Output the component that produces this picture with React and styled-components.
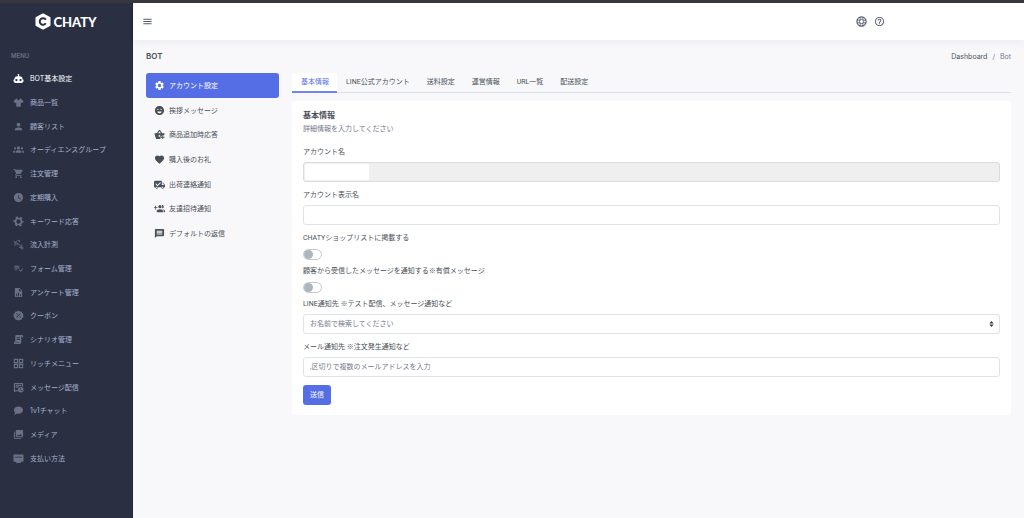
import React, { useState } from 'react';
import styled, { createGlobalStyle, css } from 'styled-components';
import {
	MdPerson,
	MdShoppingCart,
	MdWatchLater,
	MdPlaylistAddCheck,
	MdPhotoLibrary,
	MdSettings,
	MdEmojiEmotions,
	MdFavorite,
	MdMessage,
	MdHelpOutline,
	MdMenu,
} from 'react-icons/md';

const GlobalStyle = createGlobalStyle`
	*, *::before, *::after {
		box-sizing: border-box;
	}
	body {
		margin: 0;
		background: #f8f8fb;
		color: #495057;
		font-family: Inter, 'Noto Sans CJK JP', sans-serif;
		font-size: 7px;
		line-height: 11px;
	}
	button, input, select {
		font: inherit;
		color: inherit;
	}
	a {
		color: inherit;
		text-decoration: none;
	}
	ul, ol {
		list-style: none;
		margin: 0;
		padding: 0;
	}
`;

const Page = styled.div`
	display: flex;
	min-height: 100vh;
	border-top: 3px solid #38373d;
`;
const Sidebar = styled.aside`
	flex: 0 0 133px;
	background: #2a3042;
	color: #a6b0cf;
	border-right: 1px solid #1f253a;
`;
const Logo = styled.a`
	display: flex;
	align-items: center;
	justify-content: center;
	gap: 2px;
	height: 37px;
	color: #fff;
	font-family: Lato, sans-serif;
	font-size: 13px;
	font-weight: 900;
	line-height: 16px;
`;
const MenuTitle = styled.div`
	padding: 10px 11px 6px;
	color: #6a7187;
	font-size: 6px;
	font-weight: 600;
`;
const Menu = styled.ul`
	display: grid;
	grid-auto-rows: 1fr;
	height: 403px;
`;
const MenuLink = styled.a`
	display: flex;
	align-items: center;
	gap: 6px;
	height: 100%;
	padding-left: 13px;
	white-space: nowrap;
	color: ${({ $active }) => ($active ? '#fff' : '#a6b0cf')};

	svg {
		width: 11px;
		height: 11px;
		color: ${({ $active }) => ($active ? '#fff' : '#6a7187')};
	}
`;

const Main = styled.div`
	flex: 1;
	min-width: 0;
`;
const Header = styled.header`
	display: flex;
	align-items: center;
	justify-content: space-between;
	height: 37px;
	padding: 0 139px 0 9px;
	background: #fff;
	box-shadow: 0 4px 8px rgba(18, 38, 63, 0.04);
`;
const HeaderTools = styled.div`
	display: flex;
	gap: 7px;
`;
const IconButton = styled.button`
	display: flex;
	padding: 0;
	border: 0;
	background: none;
	color: #555b6d;
	cursor: pointer;

	svg {
		width: 11px;
		height: 11px;
	}
`;
const Content = styled.main`
	padding: 10px 13px;
`;
const TitleRow = styled.div`
	display: flex;
	align-items: center;
	justify-content: space-between;
	height: 12px;
	margin-bottom: 11px;
`;
const PageTitle = styled.h1`
	margin: 0;
	font-size: 8px;
	font-weight: 600;
`;
const Breadcrumb = styled.ol`
	display: flex;
	gap: 5px;
	color: #74788d;

	a {
		color: #495057;
	}
`;
const Columns = styled.div`
	display: flex;
	align-items: flex-start;
	gap: 13px;
`;
const SideNav = styled.ul`
	display: grid;
	grid-auto-rows: 1fr;
	flex: 0 0 133px;
	height: 173px;
`;
const SideLink = styled.a`
	display: flex;
	align-items: center;
	gap: 4px;
	height: 100%;
	padding-left: 8px;
	border-radius: 3px;
	color: #495057;
	${({ $active }) =>
		$active &&
		css`
			background: #556ee6;
			color: #fff;
		`}

	svg {
		width: 11px;
		height: 11px;
	}
`;
const Panel = styled.div`
	flex: 1;
	min-width: 0;
	font-family: Roboto, 'Noto Sans CJK JP', sans-serif;
`;
const Tabs = styled.div`
	display: flex;
	height: 20px;
	margin-bottom: 8px;
	box-shadow: inset 0 -1px #dcdfe5;
`;
const Tab = styled.button`
	padding: 0 8px 0 9px;
	border: 0;
	border-bottom: 2px solid transparent;
	border-radius: 3px 3px 0 0;
	background: none;
	cursor: pointer;
	${({ $active }) =>
		$active &&
		css`
			background: #fff;
			border-color: #7085ea;
			color: #556ee6;
		`}
`;
const Card = styled.form`
	padding: 9px 11px 10px;
	border-radius: 3px;
	background: #fff;
`;
const CardTitle = styled.h2`
	margin: 0 0 2px;
	font-size: 8px;
	font-weight: 600;
	line-height: 12px;
`;
const CardText = styled.p`
	margin: 0 0 12px;
	color: #74788d;
`;
const Field = styled.div`
	margin-bottom: ${({ $compact }) => ($compact ? '6px' : '8px')};
`;
const Label = styled.label`
	display: block;
	margin-bottom: ${({ $compact }) => ($compact ? '5px' : '4px')};
`;
const control = css`
	display: block;
	width: 100%;
	height: 20px;
	padding: 0 6px;
	border: 1px solid #dfe2e6;
	border-radius: 3px;
	background-color: #fff;
	outline: none;

	&::placeholder {
		color: #74788d;
		opacity: 1;
	}
`;
const Input = styled.input`
	${control}

	&:disabled {
		border-color: #d9dce0;
		background: linear-gradient(#fff, #fff) 1px 1px / 64px 16px no-repeat #efefef;
	}
`;
const SelectBox = styled.div`
	display: grid;
	align-items: center;

	> * {
		grid-area: 1 / 1;
	}
	svg {
		justify-self: end;
		width: 5px;
		height: 6px;
		margin-right: 6px;
		pointer-events: none;
	}
`;
const Select = styled.select`
	${control}
	appearance: none;
	color: #74788d;
`;
const Switch = styled.input`
	display: flex;
	align-items: center;
	appearance: none;
	width: 19px;
	height: 11px;
	margin: 0;
	padding: 0;
	border: 1px solid #c3c9d0;
	border-radius: 6px;
	background: #fff;
	cursor: pointer;

	&::before {
		content: '';
		width: 9px;
		height: 9px;
		border-radius: 50%;
		background: #adb5bd;
	}
	&:checked {
		justify-content: flex-end;
		border-color: #556ee6;
		background: #556ee6;
	}
	&:checked::before {
		background: #fff;
	}
`;
const Submit = styled.button`
	display: block;
	height: 20px;
	padding: 0 7px;
	border: 0;
	border-radius: 3px;
	background: #556ee6;
	color: #fff;
	cursor: pointer;
`;

const Glyph = ({ children }) => (
	<svg viewBox='0 0 24 24' fill='currentColor' aria-hidden='true'>
		{children}
	</svg>
);

const LogoMark = () => (
	<svg width='16' height='17' viewBox='0 0 32 34' aria-hidden='true'>
		<path
			d='M16 3 29 10v14L16 31 3 24V10z'
			fill='#fff'
			stroke='#fff'
			strokeWidth='4'
			strokeLinejoin='round'
		/>
		<path
			d='M21.5 13.5a6.5 6.5 0 1 0 0 7'
			fill='none'
			stroke='#2a3042'
			strokeWidth='4'
		/>
	</svg>
);
const Robot = () => (
	<Glyph>
		<path d='M12 2a2 2 0 0 1 2 2c0 .74-.4 1.39-1 1.73V7h1a7 7 0 0 1 7 7h1a1 1 0 0 1 1 1v3a1 1 0 0 1-1 1h-1v1a2 2 0 0 1-2 2H5a2 2 0 0 1-2-2v-1H2a1 1 0 0 1-1-1v-3a1 1 0 0 1 1-1h1a7 7 0 0 1 7-7h1V5.73c-.6-.34-1-.99-1-1.73a2 2 0 0 1 2-2M7.5 13a2.5 2.5 0 1 0 0 5 2.5 2.5 0 0 0 0-5m9 0a2.5 2.5 0 1 0 0 5 2.5 2.5 0 0 0 0-5' />
	</Glyph>
);
const Shirt = () => (
	<Glyph>
		<path d='M16 21H8a1 1 0 0 1-1-1v-7.93l-1.3 1c-.39.39-1.02.39-1.41 0l-2.83-2.78a1 1 0 0 1 0-1.41L7.34 3H9c.29 1.8 1.4 3.37 3 4.25 1.6-.88 2.71-2.45 3-4.25h1.66l5.88 5.88a1 1 0 0 1 0 1.41l-2.83 2.83c-.39.38-1.02.38-1.41 0l-1.3-1V20a1 1 0 0 1-1 1' />
	</Glyph>
);
const Group = () => (
	<Glyph>
		<circle cx='12' cy='8.5' r='3.5' />
		<circle cx='4.5' cy='9.5' r='2.5' />
		<circle cx='19.500' cy='9.5' r='2.5' />
		<path d='M5.500 19v-2c0-2 3-3.500 6.500-3.500s6.500 1.500 6.500 3.500v2zM0 19v-2c0-1.800 2-3 5-3-1 1-1.500 2-1.500 3v2zM24 19v-2c0-1.800-2-3-5-3 1 1 1.500 2 1.500 3v2z' />
	</Glyph>
);
const Cog = () => (
	<Glyph>
		<g fill='none' stroke='currentColor'>
			<circle cx='12' cy='12' r='6.5' strokeWidth='3.5' />
			<circle
				cx='12'
				cy='12'
				r='9.5'
				strokeWidth='3'
				strokeDasharray='5 4.95'
				strokeDashoffset='2.5'
			/>
		</g>
	</Glyph>
);
const Inflow = () => (
	<Glyph>
		<g fill='none' stroke='currentColor' strokeWidth='2'>
			<path d='m2 4 5 5M7 4v5H2M10 3h4v4M3 13h4M11 10l6 6M13 18h6v-6' />
			<circle cx='20' cy='20' r='2' />
			<circle cx='10' cy='11' r='1' />
		</g>
	</Glyph>
);
const FileChart = () => (
	<Glyph>
		<path
			fillRule='evenodd'
			d='M14 2H6a2 2 0 0 0-2 2v16a2 2 0 0 0 2 2h12a2 2 0 0 0 2-2V8zM13 3.5 18.5 9H13zM7 20v-6h2v6zm4 0v-8h2v8zm4 0v-4h2v4z'
		/>
	</Glyph>
);
const Coupon = () => (
	<Glyph>
		<path
			fillRule='evenodd'
			d='m12 1 3 2h3.5L20 6.500 23 9l-1 3 1 3-3 2.500-1.500 3.500H15l-3 2-3-2H5.500L4 17.500 1 15l1-3-1-3 3-2.500L5.500 3H9zM7 15.600 8.400 17 17 8.400 15.600 7zM8.500 7a1.500 1.500 0 1 0 0 3 1.500 1.500 0 0 0 0-3m7 7a1.500 1.500 0 1 0 0 3 1.500 1.500 0 0 0 0-3'
		/>
	</Glyph>
);
const Script = () => (
	<Glyph>
		<path
			fillRule='evenodd'
			d='M8 2h11a3 3 0 0 1 3 3v2h-3V5h-1v13a4 4 0 0 1-4 4H5a3 3 0 0 1-3-3v-2h3V5a3 3 0 0 1 3-3m0 5v2h7V7zm0 4v2h7v-2zm-3 8h8v-1H5z'
		/>
	</Glyph>
);
const GridView = () => (
	<Glyph>
		<path
			fill='none'
			stroke='currentColor'
			strokeWidth='2.500'
			d='M3 3h7v7H3zM14 3h7v7h-7zM3 14h7v7H3zM14 14h7v7h-7z'
		/>
	</Glyph>
);
const Broadcast = () => (
	<Glyph>
		<path d='M4 2h16a2 2 0 0 1 2 2v7l-2.500-1.500v-5h-15V18H12l1 2H6l-4 3V4c0-1 1-2 2-2m2 4h12v2.500H6zm0 4h7l-2 2.500H6z' />
		<path
			fillRule='evenodd'
			d='M17 11a6 6 0 1 1 0 12 6 6 0 0 1 0-12m-1 2v5l4 2 1-1-3.500-2v-4z'
		/>
	</Glyph>
);
const Chat = () => (
	<Glyph>
		<path d='M12 3c5.5 0 10 3.6 10 8s-4.5 8-10 8c-1.2 0-2.4-.2-3.5-.5C5.6 21 2 21 2 21c2.3-2.3 2.7-3.900 2.700-4.500C3.100 15.100 2 13.100 2 11c0-4.400 4.500-8 10-8' />
	</Glyph>
);
const Payment = () => (
	<Glyph>
		<path
			fillRule='evenodd'
			d='M3 3h18a2 2 0 0 1 2 2v12a2 2 0 0 1-2 2h-4v3H7v-3H3a2 2 0 0 1-2-2V5c0-1 1-2 2-2m1 5v2h16V8z'
		/>
	</Glyph>
);
const BasketPlus = () => (
	<Glyph>
		<path
			fillRule='evenodd'
			d='M6 9 11 2h2l5 7h5v2l-1 3a7 7 0 0 0-8 8H6c-1 0-2-1-2-2L1 11V9zm3 0h6l-3-4zm3 4a2 2 0 1 0 0 4 2 2 0 0 0 0-4'
		/>
		<path d='M18 14h2v3h3v2h-3v3h-2v-3h-3v-2h3z' />
	</Glyph>
);
const TruckCheck = () => (
	<Glyph>
		<path
			fillRule='evenodd'
			d='M3 4h14v4h3l4 5v5h-2a3 3 0 0 1-6 0H9a3 3 0 0 1-6 0H0V7a3 3 0 0 1 3-3m1.500 5.500-1.500 1.500L7.500 16 15 8.500 13.500 7l-6 6zm12.500 0V13h5l-2.500-3.500zM6 16.500a1.500 1.500 0 1 0 0 3 1.500 1.500 0 0 0 0-3m13 0a1.500 1.500 0 1 0 0 3 1.500 1.500 0 0 0 0-3'
		/>
	</Glyph>
);
const GroupPlus = () => (
	<Glyph>
		<circle cx='13' cy='8' r='3.5' />
		<path d='M6 20v-2.500c0-2.500 3.500-4 7-4s7 1.500 7 4V20zM2.500 6h2v3h3v2h-3v3h-2v-3h-3V9h3zM17 4.600a3.500 3.500 0 1 1 0 6.800c1-2 1-4.800 0-6.800M19 13.500c3 .3 5 1.800 5 4V20h-2.500v-2.500c0-1.500-1-3-2.500-4' />
	</Glyph>
);
const Lifebuoy = () => (
	<Glyph>
		<g fill='none' stroke='currentColor'>
			<circle cx='12' cy='12' r='10' strokeWidth='2.500' />
			<circle cx='12' cy='12' r='4.500' strokeWidth='2' />
			<path
				strokeWidth='2'
				d='M9 2v6M15 2v6M9 16v6M15 16v6M2 9h6M2 15h6M16 9h6M16 15h6'
			/>
		</g>
	</Glyph>
);

const menuItems = [
	{ icon: Robot, name: 'BOT基本設定' },
	{ icon: Shirt, name: '商品一覧' },
	{ icon: MdPerson, name: '顧客リスト' },
	{ icon: Group, name: 'オーディエンスグループ' },
	{ icon: MdShoppingCart, name: '注文管理' },
	{ icon: MdWatchLater, name: '定期購入' },
	{ icon: Cog, name: 'キーワード応答' },
	{ icon: Inflow, name: '流入計測' },
	{ icon: MdPlaylistAddCheck, name: 'フォーム管理' },
	{ icon: FileChart, name: 'アンケート管理' },
	{ icon: Coupon, name: 'クーポン' },
	{ icon: Script, name: 'シナリオ管理' },
	{ icon: GridView, name: 'リッチメニュー' },
	{ icon: Broadcast, name: 'メッセージ配信' },
	{ icon: Chat, name: '1v1チャット' },
	{ icon: MdPhotoLibrary, name: 'メディア' },
	{ icon: Payment, name: '支払い方法' },
];

const settingItems = [
	{ icon: MdSettings, name: 'アカウント設定' },
	{ icon: MdEmojiEmotions, name: '挨拶メッセージ' },
	{ icon: BasketPlus, name: '商品追加時応答' },
	{ icon: MdFavorite, name: '購入後のお礼' },
	{ icon: TruckCheck, name: '出荷連絡通知' },
	{ icon: GroupPlus, name: '友達招待通知' },
	{ icon: MdMessage, name: 'デフォルトの返信' },
];

const tabs = [
	'基本情報',
	'LINE公式アカウント',
	'送料設定',
	'運営情報',
	'URL一覧',
	'配送設定',
];

const SettingsForm = () => (
	<Card onSubmit={e => e.preventDefault()}>
		<CardTitle>基本情報</CardTitle>
		<CardText>詳細情報を入力してください</CardText>
		<Field>
			<Label htmlFor='account'>アカウント名</Label>
			<Input id='account' disabled />
		</Field>
		<Field>
			<Label htmlFor='displayName'>アカウント表示名</Label>
			<Input id='displayName' />
		</Field>
		<Field $compact>
			<Label $compact htmlFor='shopList'>
				CHATYショップリストに掲載する
			</Label>
			<Switch type='checkbox' id='shopList' />
		</Field>
		<Field $compact>
			<Label $compact htmlFor='notify'>
				顧客から受信したメッセージを通知する※有償メッセージ
			</Label>
			<Switch type='checkbox' id='notify' />
		</Field>
		<Field>
			<Label htmlFor='lineTarget'>
				LINE通知先 ※テスト配信、メッセージ通知など
			</Label>
			<SelectBox>
				<Select id='lineTarget'>
					<option>お名前で検索してください</option>
				</Select>
				<svg viewBox='0 0 5 7' fill='#343a40' aria-hidden='true'>
					<path d='M2.5 0 5 3H0zM0 4h5L2.5 7z' />
				</svg>
			</SelectBox>
		</Field>
		<Field>
			<Label htmlFor='mailTarget'>メール通知先 ※注文発生通知など</Label>
			<Input id='mailTarget' placeholder=',区切りで複数のメールアドレスを入力' />
		</Field>
		<Submit type='submit'>送信</Submit>
	</Card>
);

const App = () => {
	const [tab, setTab] = useState(tabs[0]);
	return (
		<>
			<GlobalStyle />
			<Page>
				<Sidebar>
					<Logo href='#'>
						<LogoMark />
						CHATY
					</Logo>
					<MenuTitle>MENU</MenuTitle>
					<Menu>
						{menuItems.map(({ icon: Icon, name }, i) => (
							<li key={name}>
								<MenuLink href='#' $active={i === 0}>
									<Icon />
									{name}
								</MenuLink>
							</li>
						))}
					</Menu>
				</Sidebar>
				<Main>
					<Header>
						<IconButton aria-label='menu'>
							<MdMenu />
						</IconButton>
						<HeaderTools>
							<IconButton aria-label='support'>
								<Lifebuoy />
							</IconButton>
							<IconButton aria-label='help'>
								<MdHelpOutline />
							</IconButton>
						</HeaderTools>
					</Header>
					<Content>
						<TitleRow>
							<PageTitle>BOT</PageTitle>
							<Breadcrumb>
								<li>
									<a href='#'>Dashboard</a>
								</li>
								<li>/</li>
								<li>Bot</li>
							</Breadcrumb>
						</TitleRow>
						<Columns>
							<SideNav>
								{settingItems.map(({ icon: Icon, name }, i) => (
									<li key={name}>
										<SideLink href='#' $active={i === 0}>
											<Icon />
											{name}
										</SideLink>
									</li>
								))}
							</SideNav>
							<Panel>
								<Tabs>
									{tabs.map(name => (
										<Tab
											key={name}
											type='button'
											$active={name === tab}
											onClick={() => setTab(name)}
										>
											{name}
										</Tab>
									))}
								</Tabs>
								<SettingsForm />
							</Panel>
						</Columns>
					</Content>
				</Main>
			</Page>
		</>
	);
};

export default App;
